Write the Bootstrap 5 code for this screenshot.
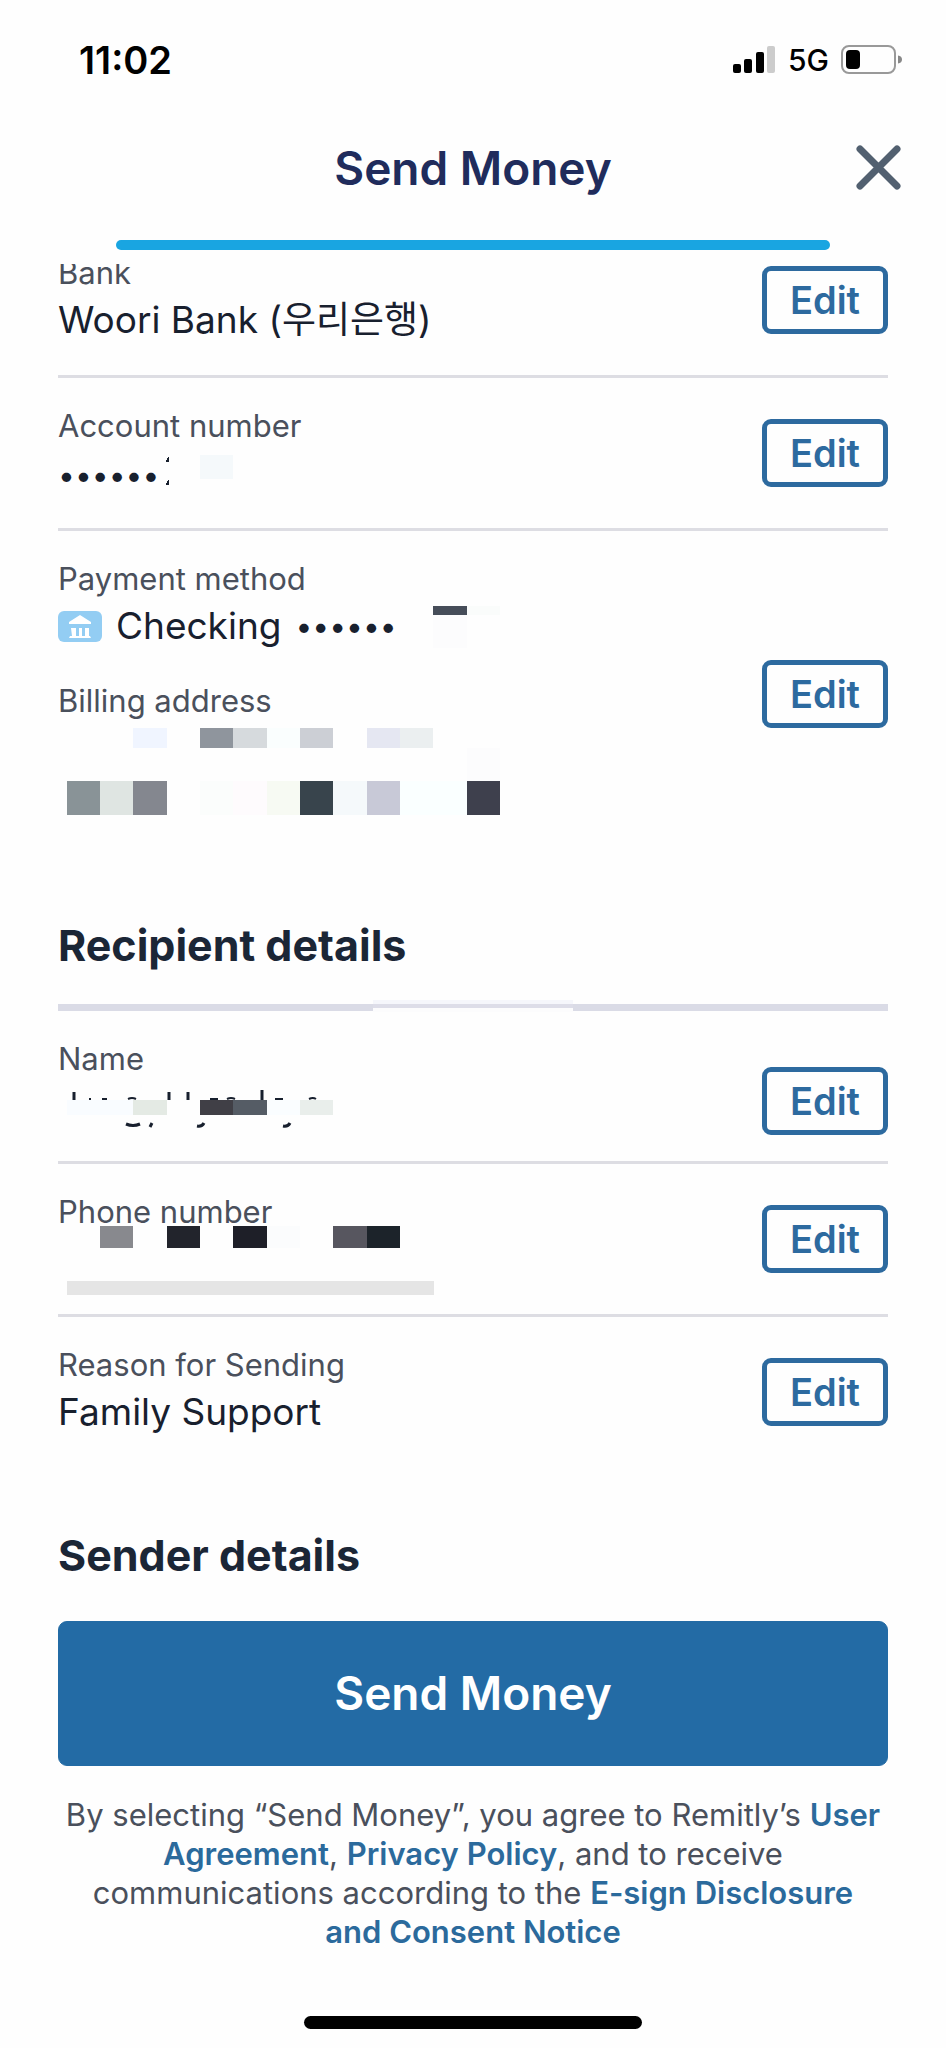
<!DOCTYPE html>
<html lang="en">
<head>
<meta charset="utf-8">
<meta name="viewport" content="width=device-width, initial-scale=1">
<title>Send Money</title>
<link href="https://cdn.jsdelivr.net/npm/bootstrap@5.3.0/dist/css/bootstrap.min.css" rel="stylesheet">
<style>
  body { font-family: Inter, "Noto Sans CJK KR", sans-serif; background: #fefefe; color: #18202e; }
  .status-bar { height: 120px; padding: 0 44px 0 79px; }
  .clock { font-size: 38px; font-weight: 600; line-height: 44px; color: #000; }
  .network { font-size: 30px; font-weight: 500; line-height: 44px; color: #000; }
  .title-bar { height: 120px; padding-top: 20px; }
  .title-bar h1 { font-size: 46px; font-weight: 600; line-height: 56px; color: #202c5c; }
  .close-btn { right: 44px; top: 24px; line-height: 0; }
  .progress-line { height: 10px; margin: 0 116px 14px; border-radius: 5px; background: #19a5e1; }
  .page-pad { padding-left: 58px; padding-right: 58px; }
  .details { overflow: hidden; }
  .details > .detail-row:first-child { margin-top: -39px; }
  .detail-row { padding: 26px 0; }
  .ruled { border-bottom: 3px solid #dddde3; }
  .detail-label { font-size: 31px; line-height: 44px; color: #4a505c; font-weight: 400; }
  .detail-value { font-size: 37px; line-height: 50px; padding-bottom: 4px; margin: 0; height: 54px; position: relative; white-space: nowrap; }
  .detail-value svg, .masked svg { display: block; }
  .method { gap: 14px; }
  .over { position: absolute; }
  .masked-dots { font-size: 30px; }
  .btn-edit { --bs-btn-color: #2d6a9f; --bs-btn-border-color: #2d6a9f; --bs-btn-border-width: 5px; --bs-btn-border-radius: 9px;
    --bs-btn-hover-color: #fff; --bs-btn-hover-bg: #2d6a9f; --bs-btn-padding-x: 0; --bs-btn-padding-y: 0;
    width: 126px; height: 68px; font-size: 38px; font-weight: 600; line-height: 56px; }
  .lowered { margin-top: 30px; }
  .section-title { font-size: 43px; font-weight: 700; line-height: 50px; margin: 63px 0 0; color: #1b2636; }
  .thick-rule { height: 7px; margin-top: 34px; background: #dadbe6; position: relative; }
  .rule-patch { left: 315px; top: -4px; width: 200px; height: 12px; background: linear-gradient(#f5f6fb 4px, #dddde8 4px 8px, #fcfcfd 8px); }
  .btn-send { --bs-btn-color: #fff; --bs-btn-bg: #236ba5; --bs-btn-border-color: #236ba5; --bs-btn-hover-color: #fff; --bs-btn-hover-bg: #1d5c8f;
    --bs-btn-border-radius: 9px; height: 145px; margin-top: 41px; font-size: 46px; font-weight: 600; }
  .terms { font-size: 31px; line-height: 39px; margin: 29px 0 65px; padding: 0 4px; color: #4a505c; text-align: center; }
  .terms a { color: #2b6a9c; font-weight: 600; text-decoration: none; }
  .home-bar { width: 338px; height: 13px; border-radius: 7px; background: #000; margin: 0 auto 19px; }
</style>
</head>
<body>
<div class="status-bar d-flex justify-content-between align-items-center">
  <div class="clock">11:02</div>
  <div class="d-flex align-items-center">
    <svg width="43" height="28" viewBox="0 0 43 28" aria-hidden="true">
      <rect x="0" y="18" width="8" height="9" rx="2"/><rect x="11" y="13" width="8" height="14" rx="2"/>
      <rect x="23" y="6" width="8" height="21" rx="2"/><rect x="34" y="0" width="8" height="27" rx="2" fill="#ccc"/>
    </svg>
    <div class="network mx-2 px-1">5G</div>
    <svg width="61" height="30" viewBox="0 0 61 30" aria-hidden="true">
      <rect x="1" y="1" width="53" height="27" rx="7" fill="none" stroke="#999" stroke-width="2"/>
      <rect x="5" y="5" width="14" height="19" rx="4"/>
      <path d="M57 10.500q4 .5 4 4t-4 4z" fill="#888"/>
    </svg>
  </div>
</div>
<header class="title-bar position-relative text-center">
  <h1 class="m-0">Send Money</h1>
  <button type="button" class="close-btn btn p-0 border-0 position-absolute" aria-label="Close">
    <svg width="46" height="46" viewBox="0 0 46 46" fill="none" stroke="#526070" stroke-width="7" stroke-linecap="round"><path d="M4 5l37 37M41 5L4 42"/></svg>
  </button>
</header>
<div class="progress-line"></div>

<main class="details page-pad">
  <div class="detail-row ruled d-flex justify-content-between align-items-center">
    <div>
      <div class="detail-label">Bank</div>
      <div class="detail-value">Woori Bank (우리은행)</div>
    </div>
    <button type="button" class="btn btn-edit">Edit</button>
  </div>
  <div class="detail-row ruled d-flex justify-content-between align-items-center">
    <div>
      <div class="detail-label">Account number</div>
      <div class="detail-value"><span class="masked-dots">••••••</span>
        <svg class="over" style="left:108px;top:7px" width="100" height="32" shape-rendering="crispEdges" aria-hidden="true">
          <path d="M0 6Q1 3 3 2V7H0zM0 29L3 24V30H0z" fill="#18202e"/><rect x="34" width="33" height="24" fill="#f5f9fb"/>
        </svg>
      </div>
    </div>
    <button type="button" class="btn btn-edit">Edit</button>
  </div>
  <div class="detail-row d-flex justify-content-between align-items-center">
    <div>
      <div class="detail-label">Payment method</div>
      <div class="detail-value method d-flex align-items-center">
        <svg width="44" height="31" viewBox="0 0 44 31" aria-hidden="true">
          <rect width="44" height="31" rx="6" fill="#93cdf3"/>
          <path fill="#fff" d="M22 4L33 11v2H11v-2zM13 17h5v8h3v-8h3v8h3v-8h4v8h1l1 2H11l1-2h2z"/>
        </svg>
        <span>Checking</span><span class="masked-dots">••••••</span>
        <svg class="over" style="left:375px;top:5px" width="68" height="42" shape-rendering="crispEdges" aria-hidden="true">
          <rect width="34" height="9" fill="#464d59"/><rect x="34" width="33" height="9" fill="#fafcfb"/><rect y="9" width="34" height="33" fill="#fcfcfd"/>
        </svg>
      </div>
      <div class="detail-label mt-4">Billing address</div>
      <div class="masked pb-3">
        <svg width="443" height="92" shape-rendering="crispEdges" role="img" aria-label="Address hidden">
          <g transform="translate(9 5)">
            <rect x="66" width="34" height="20" fill="#f0f5ff"/><rect x="133" width="33" height="20" fill="#8f959d"/><rect x="166" width="34" height="20" fill="#d6dadd"/>
            <rect x="200" width="33" height="20" fill="#fafefe"/><rect x="233" width="33" height="20" fill="#cccfd5"/><rect x="300" width="33" height="20" fill="#e5e7f2"/><rect x="333" width="33" height="20" fill="#ebeff0"/>
            <rect x="400" y="20" width="33" height="33" fill="#fcfcfd"/>
            <rect y="53" width="33" height="34" fill="#899397"/><rect x="33" y="53" width="33" height="34" fill="#dfe5e2"/><rect x="66" y="53" width="34" height="34" fill="#84878f"/>
            <rect x="133" y="53" width="33" height="34" fill="#fbfdfc"/><rect x="166" y="53" width="34" height="34" fill="#fefbfd"/><rect x="200" y="53" width="33" height="34" fill="#f7faf3"/>
            <rect x="233" y="53" width="33" height="34" fill="#38444c"/><rect x="266" y="53" width="34" height="34" fill="#f5f9fb"/><rect x="300" y="53" width="33" height="34" fill="#c8c9d7"/>
            <rect x="333" y="53" width="67" height="34" fill="#faffff"/><rect x="400" y="53" width="33" height="34" fill="#3e404d"/>
          </g>
        </svg>
      </div>
    </div>
    <button type="button" class="btn btn-edit">Edit</button>
  </div>

  <h2 class="section-title">Recipient details</h2>
  <div class="thick-rule"><div class="rule-patch over"></div></div>
  <div class="detail-row ruled d-flex justify-content-between align-items-center">
    <div>
      <div class="detail-label">Name</div>
      <div class="detail-value">
        <svg class="over" style="left:9px;top:9px" width="270" height="42" role="img" aria-label="Name hidden">
          <g fill="none" stroke="#18202e" stroke-width="3">
            <path d="M7 2v8M102 2v8M121 2v8M195 0v10"/>
            <path stroke-width="2" d="M22 9h2M35 9h5M61 9q4-2 8 0M143 9h8M160 9q4-2 8 0M208 9h8M242 9q4-2 7 0"/>
            <path d="M59 34q7 3 14 0M83 37l2-4M130 36q5 1 7-3M216 36q5 1 7-3"/>
          </g>
          <g shape-rendering="crispEdges">
            <rect y="10" width="66" height="15" fill="#f9fcff"/><rect x="66" y="10" width="34" height="15" fill="#e4eae4"/>
            <rect x="133" y="10" width="33" height="15" fill="#403f46"/><rect x="166" y="10" width="34" height="15" fill="#555c65"/>
            <rect x="200" y="10" width="33" height="15" fill="#fafdff"/><rect x="233" y="10" width="33" height="15" fill="#e9eeeb"/>
          </g>
        </svg>
      </div>
    </div>
    <button type="button" class="btn btn-edit lowered">Edit</button>
  </div>
  <div class="detail-row ruled d-flex justify-content-between align-items-center">
    <div>
      <div class="detail-label">Phone number</div>
      <div class="detail-value">
        <svg class="over" style="left:9px;top:-8px" width="368" height="69" shape-rendering="crispEdges" role="img" aria-label="Phone number hidden">
          <rect x="33" width="33" height="22" fill="#88898e"/><rect x="100" width="33" height="22" fill="#22242c"/><rect x="166" width="34" height="22" fill="#1e1f28"/>
          <rect x="200" width="33" height="22" fill="#fbfcfd"/><rect x="266" width="34" height="22" fill="#57565f"/><rect x="300" width="33" height="22" fill="#1c232a"/>
          <rect y="55" width="367" height="14" fill="#e5e5e5"/>
        </svg>
      </div>
    </div>
    <button type="button" class="btn btn-edit">Edit</button>
  </div>
  <div class="detail-row d-flex justify-content-between align-items-center">
    <div>
      <div class="detail-label">Reason for Sending</div>
      <div class="detail-value">Family Support</div>
    </div>
    <button type="button" class="btn btn-edit">Edit</button>
  </div>
  <h2 class="section-title">Sender details</h2>
</main>

<footer class="page-pad">
  <button type="button" class="btn btn-send w-100">Send Money</button>
  <p class="terms">By selecting “Send Money”, you agree to Remitly’s <a href="#">User Agreement</a>, <a href="#">Privacy Policy</a>, and to receive communications according to the <a href="#">E-sign Disclosure and Consent Notice</a></p>
</footer>
<div class="home-bar"></div>
<script src="https://cdn.jsdelivr.net/npm/bootstrap@5.3.0/dist/js/bootstrap.bundle.min.js"></script>
</body>
</html>
